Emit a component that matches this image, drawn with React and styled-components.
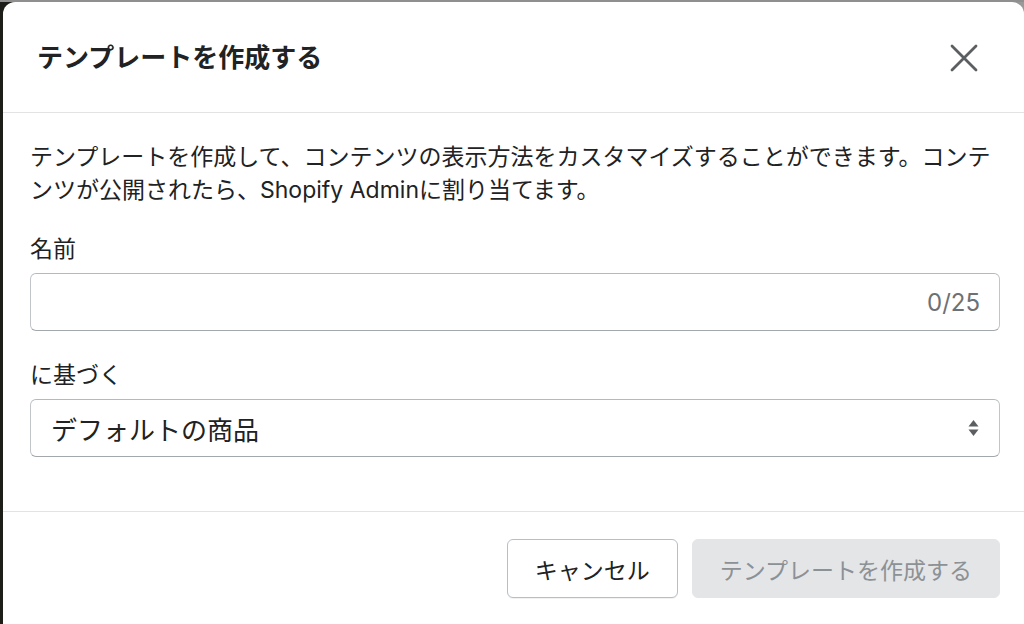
import React from "react";
import styled, { createGlobalStyle } from "styled-components";

const Global = createGlobalStyle`
  html, body {
    margin: 0;
    padding: 0;
    height: 624px;
    overflow: hidden;
  }
  body {
    background:
      linear-gradient(to bottom, #8f8f8f 0, #8f8f8f 2px, transparent 2px),
      linear-gradient(to right, #1d1e17 0, #1d1e17 60%, #9a9a9a 100%);
    font-family: "Inter", "Noto Sans CJK JP", sans-serif;
    color: #202223;
  }
`;

const Backdrop = styled.div`
  padding: 2px 0 0 3px;
  height: 622px;
  overflow: hidden;
`;

const Modal = styled.div`
  width: 1021px;
  min-height: 660px;
  background: #ffffff;
  border-radius: 12px 12px 0 0;
  display: flex;
  flex-direction: column;
`;

const Header = styled.div`
  height: 111px;
  box-sizing: border-box;
  display: flex;
  align-items: center;
  justify-content: space-between;
  padding: 2px 45px 0 34px;
  border-bottom: 1px solid #e1e3e5;
`;

const Title = styled.h2`
  margin: 0;
  font-size: 26px;
  font-weight: 600;
  line-height: 32px;
  color: #202223;
`;

const CloseButton = styled.button`
  width: 30px;
  height: 30px;
  padding: 0;
  border: none;
  background: transparent;
  display: flex;
  align-items: center;
  justify-content: center;
  cursor: pointer;
`;

const Body = styled.div`
  padding: 28px 24px 54px 27px;
  display: flex;
  flex-direction: column;
`;

const Description = styled.p`
  margin: 0 0 26px;
  font-size: 23px;
  line-height: 33px;
  color: #202223;
`;

const Field = styled.div`
  display: flex;
  flex-direction: column;
  gap: 7px;
  & + & {
    margin-top: 28px;
  }
`;

const Label = styled.label`
  font-size: 23px;
  line-height: 33px;
  color: #202223;
`;

const InputBox = styled.div`
  height: 58px;
  box-sizing: border-box;
  border: 1px solid #c1c5c9;
  border-top-color: #b4b9be;
  border-bottom-color: #a3a8ad;
  border-radius: 6px;
  display: flex;
  align-items: center;
  padding: 0 19px 0 20px;
  background: #fff;
`;

const TextInput = styled.input`
  flex: 1;
  border: none;
  outline: none;
  background: transparent;
  font: inherit;
  font-size: 24px;
  color: #202223;
  min-width: 0;
`;

const Counter = styled.span`
  font-size: 24px;
  color: #6d7175;
`;

const SelectValue = styled.span`
  flex: 1;
  font-size: 26px;
  color: #202223;
`;

const Footer = styled.div`
  border-top: 1px solid #e1e3e5;
  padding: 27px 24px 0 0;
  display: flex;
  justify-content: flex-end;
  gap: 14px;
`;

const Button = styled.button`
  height: 59px;
  box-sizing: border-box;
  padding: 0 27px;
  border-radius: 6px;
  font: inherit;
  font-size: 23px;
  font-weight: 400;
  cursor: pointer;
  border: 1px solid ${(p) => (p.$disabled ? "#e4e5e7" : "#b9bec3")};
  background: ${(p) => (p.$disabled ? "#e4e5e7" : "#ffffff")};
  color: ${(p) => (p.$disabled ? "#8c9196" : "#202223")};
  box-shadow: ${(p) => (p.$disabled ? "none" : "0 1px 0 rgba(0,0,0,0.05)")};
`;

const CloseIcon = () => (
  <svg width="28" height="28" viewBox="0 0 28 28" fill="none">
    <path
      d="M2 2 L26 26 M26 2 L2 26"
      stroke="#5c5f62"
      strokeWidth="2.8"
      strokeLinecap="round"
    />
  </svg>
);

const SelectArrows = () => (
  <svg width="13" height="20" viewBox="0 0 13 20" fill="#5c5f62">
    <path d="M6.5 2 L11.5 8.5 H1.5 Z" />
    <path d="M6.5 18 L11.5 11.5 H1.5 Z" />
  </svg>
);

export default function App() {
  return (
    <>
      <Global />
      <Backdrop>
        <Modal>
          <Header>
            <Title>テンプレートを作成する</Title>
            <CloseButton aria-label="閉じる">
              <CloseIcon />
            </CloseButton>
          </Header>
          <Body>
            <Description>
              テンプレートを作成して、コンテンツの表示方法をカスタマイズすることができます。コンテ
              <br />
              ンツが公開されたら、Shopify Adminに割り当てます。
            </Description>
            <Field>
              <Label>名前</Label>
              <InputBox>
                <TextInput />
                <Counter>0/25</Counter>
              </InputBox>
            </Field>
            <Field>
              <Label>に基づく</Label>
              <InputBox>
                <SelectValue>デフォルトの商品</SelectValue>
                <SelectArrows />
              </InputBox>
            </Field>
          </Body>
          <Footer>
            <Button>キャンセル</Button>
            <Button $disabled>テンプレートを作成する</Button>
          </Footer>
        </Modal>
      </Backdrop>
    </>
  );
}
